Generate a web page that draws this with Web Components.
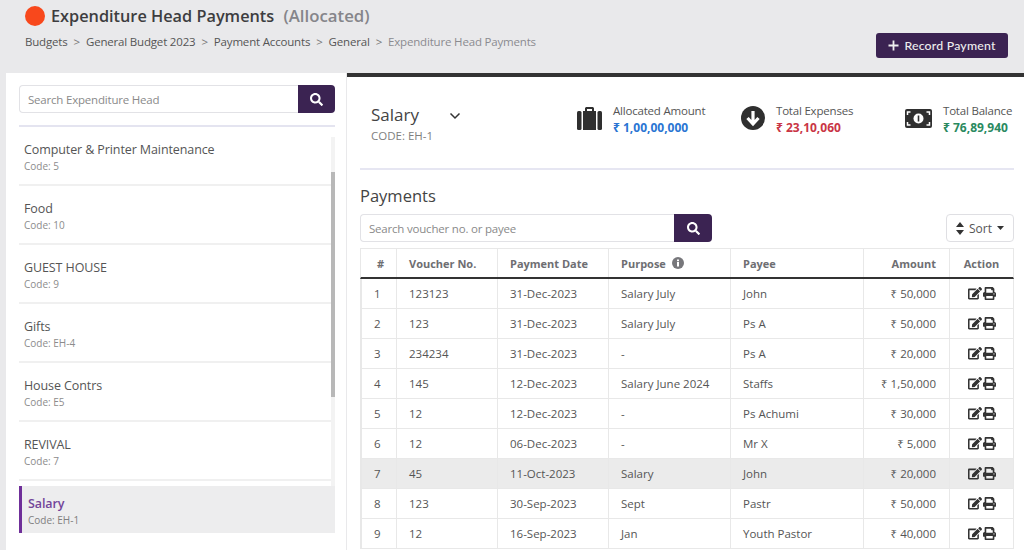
<!DOCTYPE html>
<html><head><meta charset="utf-8">
<style>
html,body{margin:0;padding:0;width:1024px;height:550px;overflow:hidden;background:#e9e9eb;font-family:"Open Sans","Noto Sans",sans-serif;color:#444}
</style></head><body>
<pay-app></pay-app>
<script>
const I={
search:'<svg viewBox="0 0 512 512" width="13" height="13" fill="#fff"><path d="M505 442.700L405.300 343c-4.500-4.500-10.600-7-17-7H372c27.600-35.300 44-79.700 44-128C416 93.100 322.900 0 208 0S0 93.100 0 208s93.100 208 208 208c48.300 0 92.700-16.400 128-44v16.300c0 6.400 2.500 12.500 7 17l99.700 99.700c9.400 9.400 24.600 9.400 33.900 0l28.300-28.300c9.400-9.400 9.400-24.600.1-34zM208 336c-70.700 0-128-57.200-128-128 0-70.700 57.200-128 128-128 70.700 0 128 57.200 128 128 0 70.700-57.200 128-128 128z"/></svg>',
edit:'<svg viewBox="0 0 576 512" width="14" height="12.500" fill="#333"><path d="M402.600 83.200l90.200 90.200c3.800 3.800 3.800 10 0 13.800L274.400 405.600l-92.800 10.300c-12.400 1.400-22.900-9.100-21.500-21.500l10.300-92.800L388.800 83.200c3.800-3.800 10-3.800 13.800 0zm162-22.900l-48.800-48.800c-15.200-15.200-39.900-15.200-55.200 0l-35.400 35.400c-3.800 3.800-3.800 10 0 13.800l90.200 90.200c3.800 3.800 10 3.800 13.800 0l35.400-35.400c15.200-15.300 15.200-40 0-55.200zM384 346.200V448H64V128h229.800c3.200 0 6.200-1.300 8.500-3.500l40-40c7.600-7.600 2.200-20.500-8.500-20.500H48C21.500 64 0 85.500 0 112v352c0 26.500 21.500 48 48 48h352c26.500 0 48-21.500 48-48V306.200c0-10.700-12.900-16-20.500-8.500l-40 40c-2.200 2.300-3.500 5.300-3.500 8.500z"/></svg>',
print:'<svg viewBox="0 0 512 512" width="13" height="13" fill="#333"><path d="M448 192V77.250c0-8.490-3.370-16.620-9.370-22.630L393.370 9.370c-6-6-14.140-9.370-22.630-9.370H96C78.330 0 64 14.330 64 32v160c-35.350 0-64 28.650-64 64v112c0 8.840 7.160 16 16 16h48v96c0 17.670 14.330 32 32 32h320c17.670 0 32-14.330 32-32v-96h48c8.840 0 16-7.160 16-16V256c0-35.350-28.650-64-64-64zm-64 256H128v-96h256v96zm0-224H128V64h192v48c0 8.840 7.160 16 16 16h48v96zm48 72c-13.250 0-24-10.750-24-24 0-13.260 10.750-24 24-24s24 10.740 24 24c0 13.250-10.750 24-24 24z"/></svg>',
};
function def(name,css,html){
  customElements.define(name,class extends HTMLElement{
    constructor(){super();const s=this.attachShadow({mode:'open'});s.innerHTML='<style>'+css+'</style>'+(typeof html==='function'?html(this):html);}
  });
}
def('search-box',`:host{display:flex;height:28px;box-sizing:border-box}
.i{flex:1;border:1px solid #e2e2e6;border-right:0;border-radius:4px 0 0 4px;background:#fff;padding:0 8px;font-size:11.500px;letter-spacing:-.2px;color:#8a8a8a;display:flex;align-items:center;white-space:nowrap}
.b{width:var(--btn-w,38px);background:#3b2352;border-radius:0 4px 4px 0;display:flex;align-items:center;justify-content:center}`,
el=>`<div class="i">${el.getAttribute('placeholder')}</div><div class="b">${I.search}</div>`);

def('head-bar',`:host{display:flex;justify-content:space-between;height:73px;box-sizing:border-box;padding:6px 16px 0 25px;background:#e9e9eb}
.t{display:flex;align-items:center;height:20px;gap:6px}
.dot{width:20px;height:20px;border-radius:50%;background:#f8481c}
h1{margin:0;font-size:16.300px;font-weight:600;color:#3d3d40;line-height:20px;white-space:nowrap}
h1 span{font-weight:600;font-size:16.800px;color:#85858a;margin-left:5px}
nav{margin-top:8px;font-size:11.500px;letter-spacing:-.18px;color:#555;display:flex;gap:6px;white-space:nowrap;line-height:16px}
nav i{font-style:normal;color:#777}nav b{font-weight:400;color:#8b8b90}
.btn{margin-top:27px;height:25px;width:132px;box-sizing:border-box;padding-bottom:1px;background:#3b2352;color:#eee;border-radius:3px;font:500 12.300px Lato,sans-serif;display:flex;align-items:center;justify-content:center;gap:5px;letter-spacing:.2px}
.btn svg{display:block}`,
`<div><div class="t"><div class="dot"></div><h1>Expenditure Head Payments <span>(Allocated)</span></h1></div>
<nav><span>Budgets</span><i>&gt;</i><span>General Budget 2023</span><i>&gt;</i><span>Payment Accounts</span><i>&gt;</i><span>General</span><i>&gt;</i><b>Expenditure Head Payments</b></nav></div>
<div class="btn"><svg width="11" height="11" viewBox="0 0 11 11"><path d="M5.500 .5v10M.5 5.500h10" stroke="#eee" stroke-width="1.800"/></svg>Record Payment</div>`);

def('head-item',`:host{display:block;width:312px;height:59px;box-sizing:border-box;border-bottom:2px solid #f0f0f0;padding:14px 0 0 5px}
:host([active]){height:47px;margin-top:5px;border:0;border-left:3px solid #6f2f99;background:#ededee;padding:9px 0 0 6px;width:316px;position:relative;z-index:1}
.n{font-size:12.500px;letter-spacing:-.1px;line-height:18px;color:#555;white-space:nowrap}
.c{font-size:10px;line-height:14px;color:#8c8c8c;margin-top:0}
:host([active]) .n{font-weight:600;color:#73459a}
:host([active]) .c{font-weight:500;color:#808080}`,
el=>`<div class="n">${el.getAttribute('name').replace('&','&amp;')}</div><div class="c">Code: ${el.getAttribute('code')}</div>`);

def('side-bar',`:host{display:block;width:340px;margin-left:6px;flex:none;background:#fff;padding:12px 11px 0 13px;box-sizing:border-box;height:477px;position:relative;--btn-w:37px}
hr{border:0;height:2px;background:#e4e4f0;margin:12px 0 0}
.list{position:relative;margin-top:0}
.bar{position:absolute;left:325px;top:64px;width:4px;height:350px;background:#f3f3f3}
.thumb{position:absolute;left:325px;top:99px;width:4px;height:225px;background:#b8b8b8}`,
`<search-box placeholder="Search Expenditure Head"></search-box><hr>
<div class="bar"></div><div class="thumb"></div><div class="list"><slot></slot></div>`);

def('stat-box',`:host{display:flex;align-items:flex-start;gap:11px;position:absolute;top:28px}
.l{font-size:11.500px;letter-spacing:-.2px;line-height:15px;color:#555;white-space:nowrap;margin-top:-2px}
.v{font-size:12px;font-weight:700;line-height:17px;white-space:nowrap;margin-top:1px}
::slotted(svg){display:block;margin-top:1px}`,
el=>`<slot></slot><div><div class="l">${el.getAttribute('label')}</div><div class="v" style="color:${el.getAttribute('color')}">${el.getAttribute('value')}</div></div>`);

const COLS='35px 101px 111px 122px 133px 86px 64px';
def('pay-row',`:host{display:grid;grid-template-columns:${COLS};height:30px;box-sizing:border-box;border-bottom:1px solid #e8e8e8;border-left:1px solid #e8e8e8;border-right:1px solid #e8e8e8;font-size:11.500px;color:#555}
:host([sel]){background:#ebebeb}
div{display:flex;align-items:center;padding:0 12px;border-left:1px solid #e8e8e8;white-space:nowrap;box-sizing:border-box}
div:first-child{border-left:0;justify-content:center;padding:0 0 0 4px}
.r{justify-content:flex-end;padding-right:13px}
.a{justify-content:center;gap:1px;padding:0}
svg{display:block}`,
el=>{const d=el.getAttribute('d').split('|');return `<div>${d[0]}</div><div>${d[1]}</div><div>${d[2]}</div><div>${d[3]}</div><div>${d[4]}</div><div class="r">₹ ${d[5]}</div><div class="a">${I.edit}${I.print}</div>`});

def('pay-table',`:host{display:block;width:654px}
.h{display:grid;grid-template-columns:${COLS};height:31px;box-sizing:border-box;border:1px solid #e8e8e8;border-bottom:2px solid #333;font-size:11px;font-weight:700;color:#6e6e72}
.h div{display:flex;align-items:center;padding:0 12px;border-left:1px solid #e8e8e8;white-space:nowrap;box-sizing:border-box;gap:6px}
.h div:first-child{border:0;justify-content:center;padding:0 0 0 4px}
.h .r{justify-content:flex-end;padding-right:13px}.h .c{justify-content:center;padding:0}
.h svg{display:block}`,
`<div class="h"><div>#</div><div>Voucher No.</div><div>Payment Date</div><div>Purpose <svg width="12" height="12" viewBox="0 0 12 12"><circle cx="6" cy="6" r="6" fill="#77777b"/><rect x="5" y="5" width="2" height="4.500" fill="#fff"/><rect x="5" y="2.500" width="2" height="1.700" fill="#fff"/></svg></div><div>Payee</div><div class="r">Amount</div><div class="c">Action</div></div><slot></slot>`);

def('main-panel',`:host{display:block;flex:1;background:#fff;border-top:4px solid #333;margin-left:1px;box-sizing:border-box;height:477px;padding:0 10px 0 13px;overflow:hidden;position:relative}
.top{height:93px;border-bottom:2px solid #e6e6f2;position:relative;box-sizing:border-box}
.sal{position:absolute;left:11px;top:26px;font-size:17px;line-height:24px;color:#444}
.code{position:absolute;left:11px;top:51px;font-size:11.500px;line-height:16px;color:#808080}
.chev{position:absolute;left:89px;top:35px}
h2{margin:0;font-size:16.500px;font-weight:400;line-height:24px;color:#444;padding-top:14px;height:30px;box-sizing:content-box}
.bar{display:flex;justify-content:space-between;align-items:flex-start;width:654px;height:34px;margin-top:0}
search-box{width:352px}
.sort{width:68px;height:28px;box-sizing:border-box;border:1px solid #dfdfe3;border-radius:4px;display:flex;align-items:center;justify-content:center;gap:5px;font-size:12px;color:#555}`,
`<div class="top"><div class="sal">Salary</div><svg class="chev" width="12" height="8" viewBox="0 0 12 8"><path d="M1.500 1.500 6 6l4.500-4.500" fill="none" stroke="#333" stroke-width="1.500"/></svg><div class="code">CODE: EH-1</div><slot name="stats"></slot></div>
<h2>Payments</h2>
<div class="bar"><search-box placeholder="Search voucher no. or payee"></search-box><div class="sort"><svg width="8" height="13" viewBox="0 0 8 13"><path d="M4 0 8 5H0zM4 13 0 8h8z" fill="#333"/></svg>Sort<svg width="7" height="4" viewBox="0 0 7 4"><path d="M0 0h7L3.500 4z" fill="#333"/></svg></div></div>
<slot></slot>`);

const heads=[['Computer & Printer Maintenance','5'],['Food','10'],['GUEST HOUSE','9'],['Gifts','EH-4'],['House Contrs','E5'],['REVIVAL','7']];
const rows=['1|123123|31-Dec-2023|Salary July|John|50,000','2|123|31-Dec-2023|Salary July|Ps A|50,000','3|234234|31-Dec-2023|-|Ps A|20,000','4|145|12-Dec-2023|Salary June 2024|Staffs|1,50,000','5|12|12-Dec-2023|-|Ps Achumi|30,000','6|12|06-Dec-2023|-|Mr X|5,000','7|45|11-Oct-2023|Salary|John|20,000','8|123|30-Sep-2023|Sept|Pastr|50,000','9|12|16-Sep-2023|Jan|Youth Pastor|40,000'];
def('pay-app',`:host{display:block;width:1024px;height:550px}.b{display:flex}`,
()=>`<head-bar></head-bar><div class="b"><side-bar>${heads.map(h=>`<head-item name="${h[0].replace('&','&amp;')}" code="${h[1]}"></head-item>`).join('')}<head-item active name="Salary" code="EH-1"></head-item></side-bar>
<main-panel>
<stat-box slot="stats" style="left:217px" label="Allocated Amount" value="₹ 1,00,00,000" color="#2a75d3"><svg width="25" height="25" viewBox="0 0 25 25" fill="#2f2f2f"><rect x="0" y="5" width="4.500" height="19" rx="1.500"/><rect x="20.500" y="5" width="4.500" height="19" rx="1.500"/><path d="M6 5h2V2.500C8 1.500 8.800 1 9.800 1h5.400c1 0 1.800.5 1.800 1.500V5h2v19H6zM10 3v2h5V3z" fill-rule="evenodd"/></svg></stat-box>
<stat-box slot="stats" style="left:381px" label="Total Expenses" value="₹ 23,10,060" color="#c93545"><svg width="24" height="24" viewBox="0 0 24 24"><circle cx="12" cy="12" r="12" fill="#2f2f2f"/><path d="M12 5v13M6.500 12l5.500 6 5.500-6" fill="none" stroke="#fff" stroke-width="3.200"/></svg></stat-box>
<stat-box slot="stats" style="left:545px" label="Total Balance" value="₹ 76,89,940" color="#2a8a5f"><svg width="27" height="19" viewBox="0 0 27 19" style="margin-top:4px"><rect width="27" height="19" rx="2" fill="#2f2f2f"/><circle cx="13.500" cy="9.500" r="5" fill="#fff"/><path d="M13.500 6.500v6" stroke="#2f2f2f" stroke-width="1.600"/><path d="M2.500 6V3h3M24.500 6V3h-3M2.500 13v3h3M24.500 13v3h-3" stroke="#fff" stroke-width="1.500" fill="none"/></svg></stat-box>
<pay-table>${rows.map((r,i)=>`<pay-row ${i==6?'sel':''} d="${r}"></pay-row>`).join('')}</pay-table>
</main-panel></div>`);
</script>
</body></html>
